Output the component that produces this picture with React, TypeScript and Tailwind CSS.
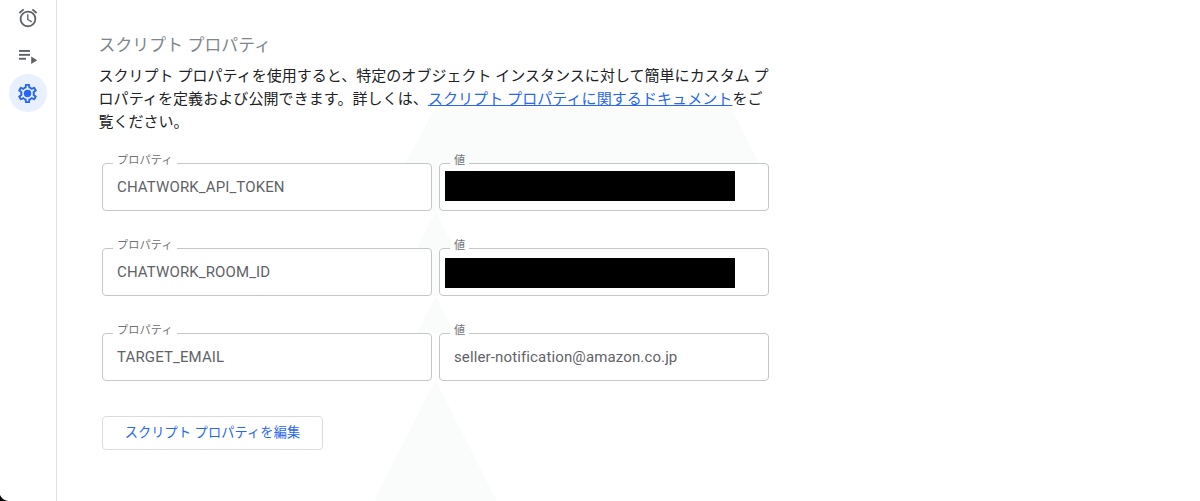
import { MdAccessAlarm, MdOutlineSettings } from 'react-icons/md';

const properties = [
    { name: 'CHATWORK_API_TOKEN', mask: 'top-[8px]' },
    { name: 'CHATWORK_ROOM_ID', mask: 'top-[10px]' },
    { name: 'TARGET_EMAIL', value: 'seller-notification@amazon.co.jp' }
];

const RunsIcon = () => (
    <svg width="20" height="16" viewBox="0 0 20 16" fill="#5f6368">
        <rect x="1" y="1" width="11" height="1.9" />
        <rect x="1" y="4.9" width="11" height="1.9" />
        <rect x="1" y="8.8" width="7" height="1.9" />
        <path d="M13.2 7.4v7.6l6-3.8z" />
    </svg>
);

// Pale geometric shapes behind the form
const Watermark = () => (
    <svg className="absolute inset-0 -z-10" width="1200" height="501" fill="#fafcfc">
        <path d="M436 107H731L759 163H405Z" />
        <path d="M432 163H439V211H432Z" />
        <path d="M435.5 211L417 248H454Z" />
        <path d="M432 248H439V296H432Z" />
        <path d="M435.5 296L417 333H454Z" />
        <path d="M435.5 380L374 501H497Z" />
    </svg>
);

const Field = ({ label, value, mask }: { label: string; value?: string; mask?: string }) => (
    <div className="relative h-12 w-[330px]">
        <fieldset className="absolute inset-x-0 -top-[8px] bottom-0 rounded-[4px] border border-[#c4c7ca] pl-[10px]">
            <legend className="h-[17px] px-[4px] text-[11.2px] leading-[12px] tracking-[0.1px] text-[#6f7377]">{label}</legend>
        </fieldset>
        {value && (
            <div className="flex h-full items-center pl-[15px] text-[15px] tracking-[0.13px] text-[#5f6368]">{value}</div>
        )}
        {mask && <div className={`absolute left-[6px] h-[30px] w-[290px] bg-black ${mask}`} />}
    </div>
);

const App = () => {
    return (
        <div className="relative isolate flex h-[501px] w-[1200px] overflow-hidden bg-white font-[Roboto,'Noto_Sans_CJK_JP',sans-serif]">
            <Watermark />

            <aside className="relative flex w-[57px] shrink-0 flex-col items-center border-r border-[#e0e0e0] pr-[1px]">
                <MdAccessAlarm className="mt-[7px] h-[22px] w-[22px] text-[#5f6368]" />
                <div className="mt-[20px] h-[16px]">
                    <RunsIcon />
                </div>
                <div className="mt-[9px] flex h-[38px] w-[38px] items-center justify-center rounded-full bg-[#e8f0fe]">
                    <div className="relative flex items-center justify-center">
                        <MdOutlineSettings className="h-[23px] w-[23px] text-[#2767f0]" />
                        <span className="absolute h-[6px] w-[6px] rounded-full bg-[#2767f0]" />
                    </div>
                </div>
                <svg className="absolute bottom-0 left-0" width="8" height="6">
                    <path d="M0 0Q2 5 8 6H0Z" fill="#000" />
                </svg>
            </aside>

            <main className="pl-[41.5px] pt-[33px]">
                <h2 className="h-[32px] text-[16.8px] leading-[25px] tracking-[0.15px] text-[#80868b]">スクリプト プロパティ</h2>
                <p className="whitespace-nowrap text-[15px] leading-[23px] text-[#202124]">
                    <span className="tracking-[0.03px]">
                        スクリプト プロパティを使用すると、特定のオブジェクト インスタンスに対して簡単にカスタム プ
                    </span>
                    <br />
                    <span className="tracking-[0.08px]">
                        ロパティを定義および公開できます。詳しくは、
                        <a href="#" className="text-[#2767f0] underline">スクリプト プロパティに関するドキュメント</a>
                        をご
                    </span>
                    <br />
                    覧ください。
                </p>

                <div className="ml-[3.5px] mt-[29px] flex flex-col gap-[37px]">
                    {properties.map((property) => (
                        <div key={property.name} className="flex gap-[7px]">
                            <Field label="プロパティ" value={property.name} />
                            <Field label="値" value={property.value} mask={property.mask} />
                        </div>
                    ))}
                </div>

                <button className="ml-[3.5px] mt-[35px] flex h-[34px] w-[221px] items-center justify-center rounded-[4px] border border-[#dadce0] bg-white text-[13.2px] tracking-[0.12px] text-[#2767f0]">
                    スクリプト プロパティを編集
                </button>
            </main>
        </div>
    );
};

export default App;
